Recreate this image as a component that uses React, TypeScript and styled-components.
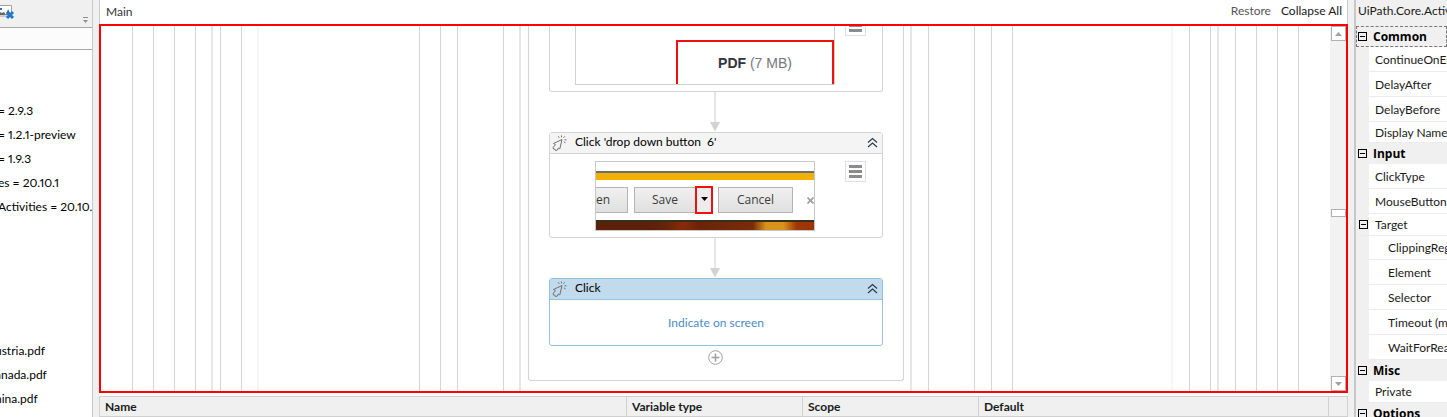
import React from 'react';
import styled, { createGlobalStyle } from 'styled-components';

const GlobalStyle = createGlobalStyle`
  *, *::before, *::after { box-sizing: border-box; }
  body { margin: 0; background: #fff; overflow: hidden; }
  button { font: inherit; color: inherit; background: none; border: 0; padding: 0; margin: 0; }
`;

const Shell = styled.div`
  display: grid;
  grid-template-columns: 93px 6px minmax(0, 1fr) 6px 93px;
  height: 100vh;
  overflow: hidden;
  font: 12px/16px Lato, 'Open Sans', sans-serif;
  color: #1a1a1a;
  white-space: nowrap;
`;

const Splitter = styled.div`
  background: #f0f0f0;
`;

/* Project panel */

const ProjectPanel = styled.aside`
  display: flex;
  flex-direction: column;
  overflow: hidden;
  border-right: 1px solid #c8c8c8;
`;

const ProjectToolbar = styled.div`
  display: flex;
  flex: none;
  justify-content: space-between;
  align-items: flex-end;
  height: 28px;
  padding: 0 3px 3px 0;
  background: #f0f0f0;
  border-bottom: 1px solid #a8a8a8;
`;

const ToolButton = styled.button`
  display: flex;
`;

const SearchInput = styled.input`
  flex: none;
  width: 100%;
  height: 22px;
  padding: 0;
  border: 0;
  border-bottom: 1px solid #a8a8a8;
  background: #fcfcfc;
  outline: 0;
`;

const Tree = styled.ul`
  margin: 0;
  padding: 49px 0 0;
  list-style: none;
`;

const TreeRow = styled.li<{ $file?: boolean }>`
  height: 24px;
  line-height: 24px;
  text-indent: ${p => (p.$file ? -13 : -2)}px;
  font-variant-numeric: proportional-nums;
  color: #000;
`;

/* Designer */

const Designer = styled.main`
  display: flex;
  flex-direction: column;
  min-width: 0;
`;

const Breadcrumbs = styled.header`
  display: flex;
  flex: none;
  align-items: center;
  gap: 10px;
  height: 24px;
  padding: 0 5px 0 6px;
  border-left: 1px solid #ccc;
  border-right: 1px solid #ccc;
`;

const Crumb = styled.span`
  flex: 1;
  color: #333;
`;

const HeaderAction = styled.button<{ $dim?: boolean }>`
  height: 22px;
  align-self: flex-start;
  color: ${p => (p.$dim ? '#555' : '#1a1a1a')};
`;

const Canvas = styled.section`
  display: flex;
  flex: 1;
  min-height: 0;
  border: 2px solid #f00;
`;

const Viewport = styled.div`
  display: flex;
  flex: 1;
  justify-content: center;
  min-width: 0;
  overflow: hidden;
`;

const Frame = styled.div<{ $left: number; $right: number; $line: string; $width: number }>`
  flex: none;
  padding: 0 ${p => p.$right}px 0 ${p => p.$left}px;
  border: solid ${p => p.$line};
  border-width: 0 ${p => p.$width}px;
  display: flex;
`;

const Sequence = styled.div`
  display: flex;
  flex-direction: column;
  align-items: center;
  align-self: flex-start;
  padding: 0 20px 15px;
  border: 1px solid #d4d4d4;
  border-top: 0;
  border-radius: 0 0 3px 3px;
`;

const Card = styled.article<{ $selected?: boolean; $cut?: boolean }>`
  width: 334px;
  border: 1px solid ${p => (p.$selected ? '#97c1e0' : '#d4d4d4')};
  border-top-width: ${p => (p.$cut ? 0 : 1)}px;
  border-radius: ${p => (p.$cut ? '0 0 3px 3px' : '3px')};
`;

const CardHeader = styled.header<{ $selected?: boolean }>`
  display: flex;
  align-items: center;
  gap: 8px;
  height: 21px;
  padding: 0 4px 1px 1px;
  background: ${p => (p.$selected ? '#c1dbed' : '#f4f4f4')};
  border-bottom: 1px solid ${p => (p.$selected ? '#97c1e0' : '#d4d4d4')};
`;

const CardTitle = styled.h3`
  flex: 1;
  height: 18px;
  margin: 0;
  font: inherit;
  line-height: 16px;
  color: #000;
  white-space: pre;
`;

const CardBody = styled.div<{ $cut?: boolean }>`
  display: grid;
  grid-template-columns: 1fr 21px;
  justify-items: center;
  align-items: start;
  padding: ${p => (p.$cut ? '0 16px 6px 15px' : '7px 16px 6px 15px')};
`;

const MenuButton = styled.button<{ $cut?: boolean }>`
  display: flex;
  align-items: ${p => (p.$cut ? 'flex-start' : 'center')};
  justify-content: center;
  width: 21px;
  height: ${p => (p.$cut ? 10 : 21)}px;
  border: 1px solid #dfdfea;
  border-top-width: ${p => (p.$cut ? 0 : 1)}px;
`;

const PdfShot = styled.div`
  display: flex;
  justify-content: flex-end;
  align-items: flex-end;
  width: 260px;
  height: 59px;
  border: solid #d0d0d0;
  border-width: 0 1px 1px;
`;

const PdfTarget = styled.div`
  width: 158px;
  height: 44px;
  border: 2px solid #f01010;
  border-bottom: 0;
  font: 14px/42px 'Liberation Sans', sans-serif;
  color: #77777c;
  text-align: center;
  strong { color: #33333c; }
`;

const DialogShot = styled.div`
  width: 220px;
  height: 70px;
  padding-top: 9px;
  overflow: hidden;
  border: 1px solid #c8c8c8;
`;

const GoldBar = styled.div`
  height: 9px;
  border-top: 2px solid #6e6e72;
  background: #f2b100;
`;

const DialogRow = styled.div`
  display: flex;
  align-items: center;
  height: 40px;
`;

const FakeButton = styled.button<{ $width: number; $cut?: boolean }>`
  width: ${p => p.$width}px;
  height: 26px;
  background: linear-gradient(#f0f0f0, #e0e0e0);
  border: 1px solid #b4b4b4;
  border-left-width: ${p => (p.$cut ? 0 : 1)}px;
  font-family: 'Open Sans', sans-serif;
  color: #3c3c3c;
  text-align: ${p => (p.$cut ? 'left' : 'center')};
`;

const SplitButton = styled.div`
  display: flex;
  align-items: center;
  margin: 0 5px 0 6px;
`;

const ArrowButton = styled.button`
  display: flex;
  align-items: center;
  justify-content: center;
  width: 18px;
  height: 28px;
  padding-bottom: 2px;
  margin-left: -1px;
  background: #ececec;
  border: 2px solid #f01010;
`;

const CloseButton = styled.button`
  display: flex;
  margin-left: 14px;
`;

const PhotoStrip = styled.div`
  height: 10px;
  border-top: 2px solid #33301c;
  background: linear-gradient(90deg, #5c1f08 0 25%, #6a2408 33%, #8a2a08 40%, #6a2408 48%, #7a2c08 72%, #d8921c 78%, #d8921c 86%, #a03806 92%, #9c3404);
`;

const PickLink = styled.a`
  display: block;
  line-height: 45px;
  text-align: center;
  text-decoration: none;
  color: #4a8cc8;
`;

const AddButton = styled.button`
  display: flex;
  margin-top: 4px;
`;

const ScrollBar = styled.div`
  display: flex;
  flex: none;
  flex-direction: column;
  align-items: center;
  width: 16px;
  background: #f2f2f2;
`;

const ScrollTrack = styled.div`
  display: flex;
  flex: 1;
  flex-direction: column;
  &::before { content: ''; flex: 20; }
  &::after { content: ''; flex: 19; }
`;

const ScrollButton = styled.button`
  display: flex;
  align-items: center;
  justify-content: center;
  width: 15px;
  height: 15px;
  background: #fff;
  border: 1px solid #b0b0b0;
`;

const ScrollThumb = styled.div`
  width: 15px;
  height: 8px;
  background: #fff;
  border: 1px solid #b0b0b0;
`;

/* Variables */

const VariablesTable = styled.table`
  flex: none;
  width: 100%;
  margin-top: 3px;
  table-layout: fixed;
  border-collapse: collapse;
`;

const Column = styled.th<{ $width?: number }>`
  width: ${p => (p.$width ? `${p.$width}px` : 'auto')};
  height: 20px;
  padding: 0 5px;
  border: 1px solid #d0d0d0;
  background: #f0f0f0;
  font-size: 12px;
  font-weight: bold;
  line-height: 16px;
  text-align: left;
`;

/* Properties */

const Properties = styled.aside`
  overflow: hidden;
  border-left: 2px solid #c8c8c8;
  background: #f0f0f0;
`;

const TypeName = styled.h2`
  height: 26px;
  margin: 0;
  padding-left: 2px;
  font: inherit;
  line-height: 22px;
`;

const Category = styled.button<{ $focused?: boolean }>`
  display: flex;
  align-items: center;
  gap: 6px;
  width: 100%;
  height: 21px;
  padding: 0 2px;
  font-family: 'Open Sans', sans-serif;
  font-weight: bold;
  color: #000;
  outline: ${p => (p.$focused ? '1px dashed #777' : '0')};
  outline-offset: -1px;
`;

const Property = styled.div<{ $height: number; $nested?: boolean }>`
  height: ${p => p.$height}px;
  margin-left: 13px;
  padding-left: ${p => (p.$nested ? 19 : 6)}px;
  line-height: ${p => p.$height}px;
  background: #fff;
  border-bottom: 1px solid #ececec;
`;

const Expandable = styled.button`
  display: flex;
  width: 100%;
  height: 22px;
  align-items: center;
  padding-left: 3px;
  background: linear-gradient(90deg, #f0f0f0 13px, #fff 13px);
  border-bottom: 1px solid #ececec;
  gap: 7px;
`;

const MinusBox = () => (
  <svg width="9" height="9" viewBox="0 0 9 9" fill="none" stroke="#000" shapeRendering="crispEdges">
    <path d="M.5 .5h8v8h-8zM2 4.5h5" />
  </svg>
);

const ClickIcon = () => (
  <svg width="16" height="16" viewBox="0 0 16 16" fill="none" stroke="#707070" strokeWidth="1">
    <path d="M11 4.500L2.500 8.500l2 1.300-2.300 2.400.2 1.800 1.400.1.500 1.300 1.900-.2 1.200-2.200 1.400.9z" strokeLinejoin="round" />
    <path d="M7.300 1.300l.9 1.500M10.500 .5v1.800M13.800 1.300l-1.300 1.500M13.500 4.800h2M12.900 6.900l1.600.9" />
  </svg>
);

const ChevronsUp = () => (
  <svg width="11" height="11" viewBox="0 0 11 11" fill="none" stroke="#2b3a4a" strokeWidth="1.2">
    <path d="M1 5.5l4.5-4 4.5 4M1 10l4.5-4 4.5 4" />
  </svg>
);

const MenuLines = () => (
  <svg width="13" height="13" viewBox="0 0 13 13" fill="#8c8c8c">
    <path d="M0 0h13v3H0zM0 5h13v3H0zM0 10h13v3H0z" />
  </svg>
);

const Connector = () => (
  <svg width="12" height="40" viewBox="0 0 12 40">
    <path d="M4 0h2v30H4z" fill="#e6e6e6" />
    <path d="M0 30h10L5 39.500z" fill="#d2d2d2" />
  </svg>
);

const Triangle = ({ up, color = '#a0a0a0' }: { up?: boolean; color?: string }) => (
  <svg width="7" height="4" viewBox="0 0 7 4" fill={color}>
    <path d={up ? 'M0 4L3.500 0 7 4z' : 'M0 0h7L3.500 4z'} />
  </svg>
);

type FrameSpec = { left: number; right: number; line: string; width: number };
const LINE = '#d4d4d4';
const frames: FrameSpec[] = [
  { left: 20, right: 20, line: LINE, width: 1 },
  { left: 20, right: 20, line: LINE, width: 1 },
  { left: 20, right: 20, line: LINE, width: 1 },
  { left: 15, right: 16, line: LINE, width: 1 },
  { left: 7, right: 6, line: '#e6e6e6', width: 2 },
  { left: 20, right: 20, line: LINE, width: 1 },
  { left: 15, right: 16, line: LINE, width: 1 },
  { left: 160, right: 158, line: '#f6f6f6', width: 2 },
  { left: 20, right: 20, line: LINE, width: 1 },
  { left: 16, right: 16, line: LINE, width: 1 },
  { left: 45, right: 45, line: LINE, width: 1 },
  { left: 15, right: 16, line: LINE, width: 1 },
  { left: 7, right: 6, line: '#e6e6e6', width: 2 },
];

const Nested = ({ children }: { children: React.ReactNode }) => (
  <>
    {frames.reduceRight<React.ReactNode>(
      (inner, f) => (
        <Frame $left={f.left} $right={f.right} $line={f.line} $width={f.width}>
          {inner}
        </Frame>
      ),
      children,
    )}
  </>
);

const treeRows = [
  '= 2.9.3', '= 1.2.1-preview', '= 1.9.3', 'es = 20.10.1', 'Activities = 20.10.6',
  '', '', '', '', '', 'Austria.pdf', 'Canada.pdf', 'China.pdf',
];

export default function App() {
  return (
    <>
      <GlobalStyle />
      <Shell>
        <ProjectPanel>
          <ProjectToolbar>
            <ToolButton aria-label="Remove unused screenshots">
              <svg width="15" height="19" viewBox="0 0 15 19">
                <path d="M0 .5h11.500V11H0" fill="#fff" stroke="#a0a0a0" />
                <path d="M0 10V7l2 1 2-1 2 3 2-6 3 6z" fill="#666" />
                <path d="M0 3h2v2H0z" fill="#1c78d0" />
                <path d="M7 7l6 6M13 7l-6 6" stroke="#1c78d0" strokeWidth="3" />
              </svg>
            </ToolButton>
            <ToolButton aria-label="Toolbar options">
              <svg width="7" height="7" viewBox="0 0 7 7" fill="#909090">
                <path d="M1 0h5v1H1zM1 3h5L3.500 6z" />
              </svg>
            </ToolButton>
          </ProjectToolbar>
          <SearchInput aria-label="Search project" />
          <Tree>
            {treeRows.map((text, i) => (
              <TreeRow key={i} $file={text.endsWith('.pdf')}>{text}</TreeRow>
            ))}
          </Tree>
        </ProjectPanel>
        <Splitter />
        <Designer>
          <Breadcrumbs>
            <Crumb>Main</Crumb>
            <HeaderAction $dim>Restore</HeaderAction>
            <HeaderAction>Collapse All</HeaderAction>
          </Breadcrumbs>
          <Canvas>
            <Viewport>
              <Nested>
                <Sequence>
                  <Card $cut>
                    <CardBody $cut>
                      <PdfShot>
                        <PdfTarget><strong>PDF</strong> (7 MB)</PdfTarget>
                      </PdfShot>
                      <MenuButton $cut aria-label="Options">
                        <svg width="13" height="6" viewBox="0 0 13 6" fill="#8c8c8c">
                          <path d="M0 0h13v1H0zM0 3h13v3H0z" />
                        </svg>
                      </MenuButton>
                    </CardBody>
                  </Card>
                  <Connector />
                  <Card>
                    <CardHeader>
                      <ClickIcon />
                      <CardTitle>Click 'drop down button  6'</CardTitle>
                      <ToolButton aria-label="Collapse"><ChevronsUp /></ToolButton>
                    </CardHeader>
                    <CardBody>
                      <DialogShot>
                        <GoldBar />
                        <DialogRow>
                          <FakeButton $width={32} $cut>en</FakeButton>
                          <SplitButton>
                            <FakeButton $width={62}>Save</FakeButton>
                            <ArrowButton aria-label="Save options"><Triangle color="#000" /></ArrowButton>
                          </SplitButton>
                          <FakeButton $width={75}>Cancel</FakeButton>
                          <CloseButton aria-label="Close">
                            <svg width="7" height="7" viewBox="0 0 7 7" stroke="#a0a0a0" strokeWidth="1.800">
                              <path d="M.5 .5l6 6M6.500 .5l-6 6" />
                            </svg>
                          </CloseButton>
                        </DialogRow>
                        <PhotoStrip />
                      </DialogShot>
                      <MenuButton aria-label="Options"><MenuLines /></MenuButton>
                    </CardBody>
                  </Card>
                  <Connector />
                  <Card $selected>
                    <CardHeader $selected>
                      <ClickIcon />
                      <CardTitle>Click</CardTitle>
                      <ToolButton aria-label="Collapse"><ChevronsUp /></ToolButton>
                    </CardHeader>
                    <PickLink href="#indicate">Indicate on screen</PickLink>
                  </Card>
                  <AddButton aria-label="Add activity">
                    <svg width="16" height="15" viewBox="0 0 16 15" fill="none" stroke="#a0a0a0">
                      <circle cx="7.500" cy="7.500" r="6.800" />
                      <path d="M7.500 3.500v8M3.500 7.500h8" strokeWidth="1.500" />
                    </svg>
                  </AddButton>
                </Sequence>
              </Nested>
            </Viewport>
            <ScrollBar>
              <ScrollButton aria-label="Scroll up"><Triangle up /></ScrollButton>
              <ScrollTrack><ScrollThumb /></ScrollTrack>
              <ScrollButton aria-label="Scroll down"><Triangle /></ScrollButton>
            </ScrollBar>
          </Canvas>
          <VariablesTable>
            <thead>
              <tr>
                <Column scope="col" $width={527}>Name</Column>
                <Column scope="col" $width={176}>Variable type</Column>
                <Column scope="col" $width={176}>Scope</Column>
                <Column scope="col">Default</Column>
                <Column $width={19} aria-label="Scroll column" />
              </tr>
            </thead>
          </VariablesTable>
        </Designer>
        <Splitter />
        <Properties>
          <TypeName>UiPath.Core.Activities.Click</TypeName>
          <Category $focused><MinusBox />Common</Category>
          <Property $height={25}>ContinueOnError</Property>
          <Property $height={25}>DelayAfter</Property>
          <Property $height={25}>DelayBefore</Property>
          <Property $height={21}>Display Name</Property>
          <Category><MinusBox />Input</Category>
          <Property $height={25}>ClickType</Property>
          <Property $height={25}>MouseButton</Property>
          <Expandable><MinusBox />Target</Expandable>
          <Property $height={24} $nested>ClippingRegion</Property>
          <Property $height={25} $nested>Element</Property>
          <Property $height={25} $nested>Selector</Property>
          <Property $height={25} $nested>Timeout (milliseconds)</Property>
          <Property $height={25} $nested>WaitForReady</Property>
          <Category><MinusBox />Misc</Category>
          <Property $height={22}>Private</Property>
          <Category><MinusBox />Options</Category>
        </Properties>
      </Shell>
    </>
  );
}
